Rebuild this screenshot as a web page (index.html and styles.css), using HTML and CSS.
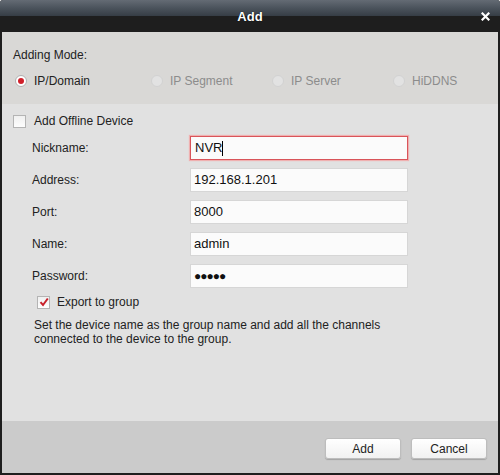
FILE: index.html
```html
<!DOCTYPE html>
<html lang="en">
<head>
  <meta charset="UTF-8">
  <title>Add</title>
  <link rel="stylesheet" href="styles.css">
</head>
<body>
  <div class="dialog">
    <div class="titlebar">
      <span class="title">Add</span>
      <svg class="close" width="9" height="9" viewBox="0 0 9 9">
        <path d="M1.5 1.5 L7.5 7.5 M7.5 1.5 L1.5 7.5" stroke="#fff" stroke-width="2.2" stroke-linecap="square"/>
      </svg>
    </div>

    <div class="mode">
      <div class="mode-label">Adding Mode:</div>
      <div class="radios">
        <label class="radio checked"><span class="dot"></span>IP/Domain</label>
        <label class="radio disabled"><span class="dot"></span>IP Segment</label>
        <label class="radio disabled"><span class="dot"></span>IP Server</label>
        <label class="radio disabled"><span class="dot"></span>HiDDNS</label>
      </div>
    </div>

    <div class="form">
      <label class="check offline"><span class="box"></span>Add Offline Device</label>

      <div class="rows">
        <div class="row">
          <span class="lbl">Nickname:</span>
          <div class="field focus">NVR<span class="caret"></span></div>
        </div>
        <div class="row">
          <span class="lbl">Address:</span>
          <div class="field">192.168.1.201</div>
        </div>
        <div class="row">
          <span class="lbl">Port:</span>
          <div class="field">8000</div>
        </div>
        <div class="row">
          <span class="lbl">Name:</span>
          <div class="field">admin</div>
        </div>
        <div class="row">
          <span class="lbl">Password:</span>
          <div class="field pw">●●●●●</div>
        </div>
      </div>

      <label class="check export">
        <span class="box">
          <svg width="10" height="10" viewBox="0 0 10 10">
            <path d="M1.5 5.2 L4 8 L8.8 1.5" fill="none" stroke="#c8202a" stroke-width="2"/>
          </svg>
        </span>Export to group
      </label>
      <p class="note">Set the device name as the group name and add all the channels<br>connected to the device to the group.</p>
    </div>

    <div class="footer">
      <button class="btn">Add</button>
      <button class="btn">Cancel</button>
    </div>
  </div>
</body>
</html>
```

FILE: styles.css
```css
body {
  margin: 0;
  background: #fff;
  font-family: "Liberation Sans", Arial, sans-serif;
  font-size: 12px;
  color: #222;
}
.dialog {
  width: 500px;
  height: 475px;
  box-sizing: border-box;
  background: #1e1e1e;
  padding: 0 2px 2px;
  border-radius: 3px 3px 0 0;
  display: flex;
  flex-direction: column;
}
.titlebar {
  height: 32px;
  margin: 0 -2px;
  border-radius: 3px 3px 0 0;
  background: linear-gradient(#646b74 0, #4b535c 8px, #363d45 16px, #1e1e1e 16px, #1e1e1e 100%);
  display: flex;
  align-items: center;
  justify-content: center;
  position: relative;
}
.title {
  color: #fff;
  font-weight: bold;
  font-size: 13px;
  text-shadow: 0 0 1px #000;
}
.close {
  position: absolute;
  right: 10px;
  top: 12px;
}

.mode {
  background: #d9d8d6;
  padding: 15px 0 15px 11px;
}
.mode-label {
  line-height: 16px;
}
.radios {
  margin-top: 10px;
  display: grid;
  grid-template-columns: 136px 121px 121px auto;
  padding-left: 2px;
}
.radio {
  display: flex;
  align-items: center;
  gap: 7px;
  line-height: 16px;
}
.radio .dot {
  width: 10px;
  height: 10px;
  border-radius: 50%;
  border: 1px solid #c6c6c6;
  background: #ececec;
  position: relative;
}
.radio.checked .dot {
  background: #fff;
  border-color: #b0b0b0;
}
.radio.checked .dot::after {
  content: "";
  position: absolute;
  left: 2px;
  top: 2px;
  width: 6px;
  height: 6px;
  border-radius: 50%;
  background: #d0202a;
}
.radio.disabled {
  color: #8c8c8c;
}
.radio.disabled .dot {
  border-color: #d2d2d2;
  background: #e2e2e2;
}

.form {
  flex: 1;
  background: #e1e1e1;
  padding: 9px 0 0 11px;
}
.check {
  display: flex;
  align-items: center;
  gap: 8px;
  line-height: 16px;
}
.check .box {
  width: 11px;
  height: 11px;
  border: 1px solid #b4b4b4;
  background: linear-gradient(#f0f0f0, #fdfdfd);
  display: flex;
  align-items: center;
  justify-content: center;
}
.rows {
  margin-top: 7px;
  padding-left: 19px;
  display: flex;
  flex-direction: column;
  gap: 8px;
}
.row {
  display: flex;
  align-items: center;
}
.lbl {
  width: 158px;
}
.field {
  width: 210px;
  height: 22px;
  line-height: 22px;
  padding: 0 3px;
  background: #fbfbfb;
  border: 1px solid #d6d6d6;
  font-size: 13px;
  color: #111;
  display: flex;
  align-items: center;
}
.field.focus {
  border-color: #d9545a;
  box-shadow: 0 0 1px 1px #efb0b0;
  padding-left: 4px;
  width: 209px;
}
.caret {
  width: 1px;
  height: 15px;
  background: #000;
}
.field.pw {
  font-size: 12px;
  letter-spacing: -1px;
}
.export {
  margin: 6px 0 0 24px;
  gap: 7px;
}
.note {
  margin: 8px 0 0 21px;
  line-height: 14px;
}

.footer {
  height: 52px;
  box-sizing: border-box;
  background: #cbcbcb;
  display: flex;
  justify-content: flex-end;
  align-items: flex-start;
  gap: 10px;
  padding: 17px 11px 0 0;
}
.btn {
  width: 76px;
  height: 21px;
  font-family: inherit;
  font-size: 12px;
  color: #222;
  background: linear-gradient(#ffffff, #f1f1f1);
  border: 1px solid #bdbdbd;
  border-radius: 3px;
  box-shadow: 0 1px 1px rgba(0, 0, 0, 0.2);
  padding: 0;
}
```
